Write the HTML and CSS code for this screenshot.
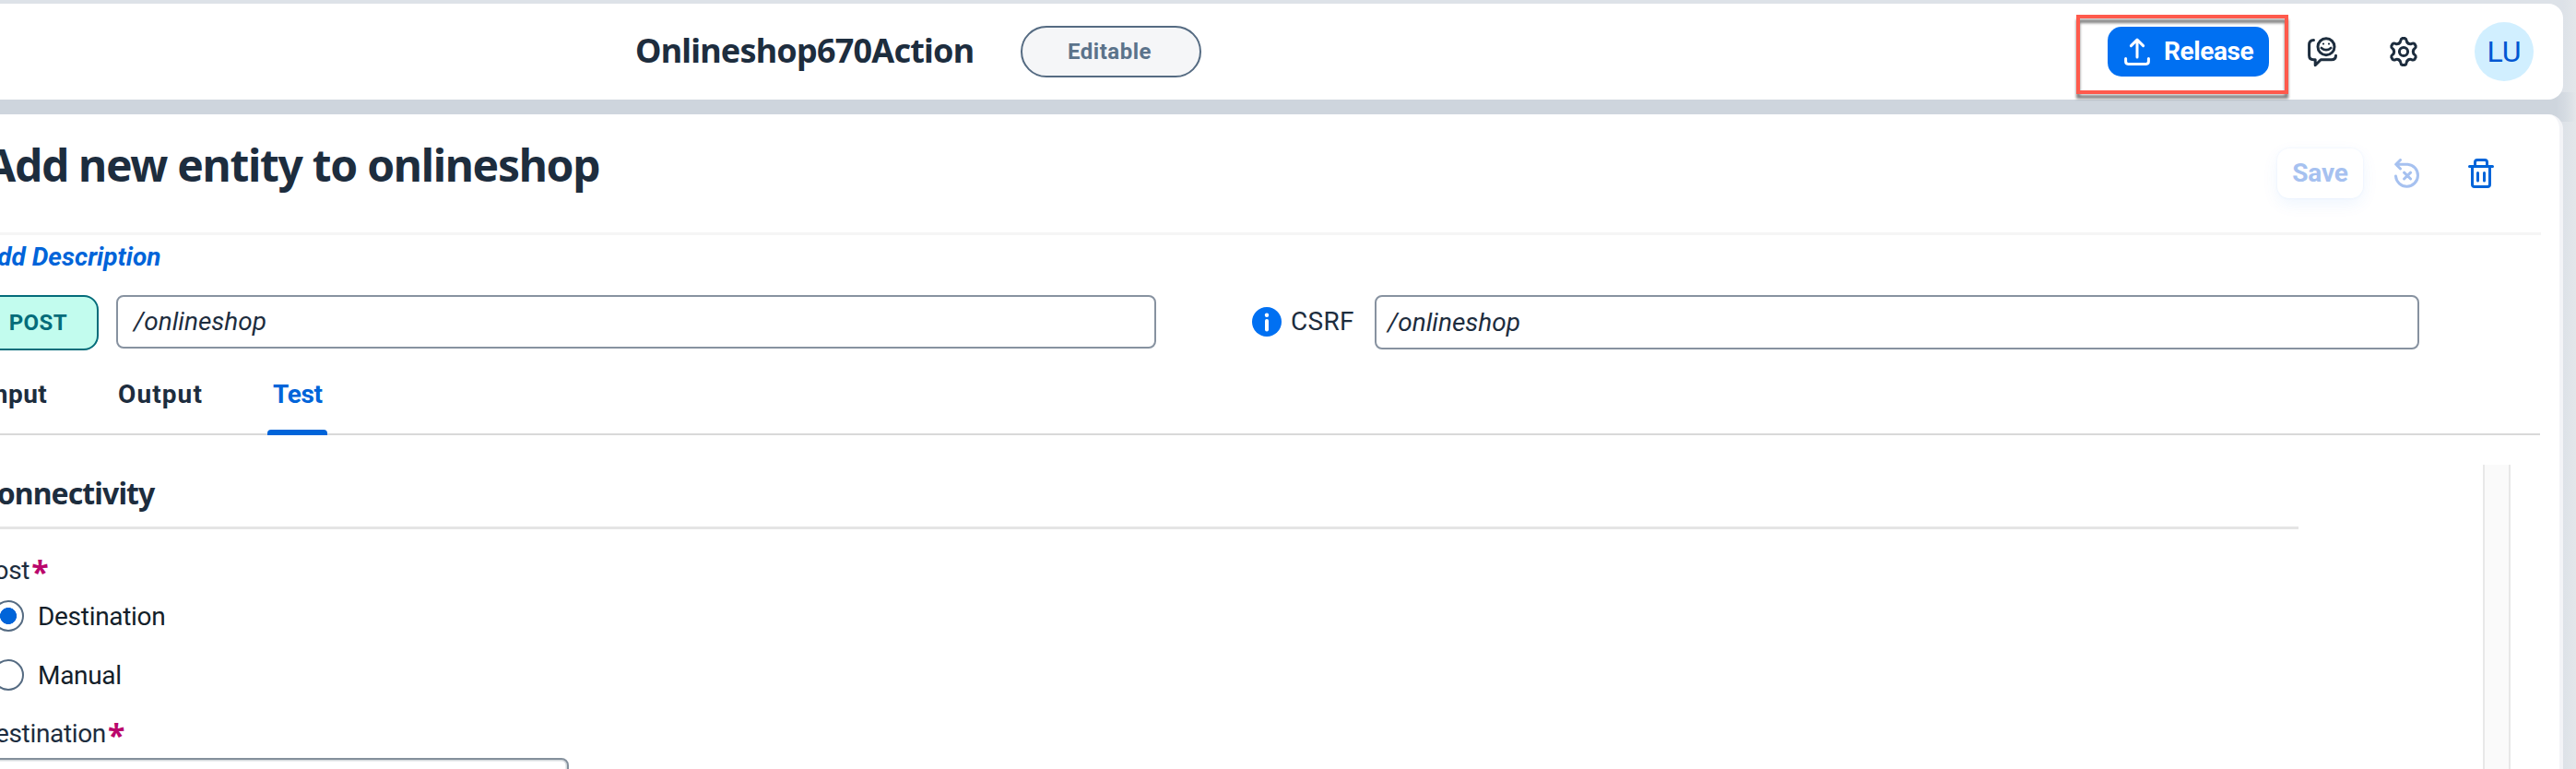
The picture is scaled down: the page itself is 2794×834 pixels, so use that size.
FILE: index.html
```
<!DOCTYPE html>
<html lang="en">
<head>
<meta charset="utf-8">
<title>Onlineshop670Action</title>
<link rel="stylesheet" href="styles.css">
</head>
<body>
<div class="page">
  <header class="shell">
    <h2 class="shell-title">Onlineshop670Action</h2>
    <span class="pill">Editable</span>
    <div class="shell-actions">
      <div class="release-wrap">
        <button class="release">
          <svg class="ic-release" viewBox="0 0 28 30" fill="none" stroke="currentColor" stroke-width="3" stroke-linecap="round" stroke-linejoin="round"><path d="M14 21V2.400M7.400 8.600 14 2.200l6.600 6.400M1.600 22.400v3.400q0 2.600 2.600 2.600h19.600q2.600 0 2.600-2.600v-3.400"/></svg>
          <span>Release</span>
        </button>
        <span class="highlight"></span>
      </div>
      <svg class="ic-feedback" viewBox="0 0 32 33" fill="none" stroke="currentColor" stroke-width="3" stroke-linecap="round" stroke-linejoin="round"><circle cx="20" cy="10.700" r="9"/><path d="M14.800 12q5.200 4.400 10.400 0" stroke-width="2.600"/><path d="M6.500 3.600Q1.600 3.600 1.600 8.500V20q0 4.700 4.700 4.700h1.900v6l6-6h11.600q4.700 0 4.700-4.500"/><circle cx="17" cy="7.600" r="1.100" fill="currentColor" stroke="none"/><circle cx="23" cy="7.600" r="1.100" fill="currentColor" stroke="none"/></svg>
      <svg class="ic-gear" viewBox="0 0 32 32" fill="none" stroke="currentColor" stroke-width="3" stroke-linecap="round" stroke-linejoin="round">
        <defs><path id="tooth" d="M10.800 7.100Q12.700 6 12.800 4.200 13 2 14.700 1.500h2.600Q19 2 19.200 4.200 19.300 6 21.200 7.100"/></defs>
        <circle cx="16" cy="16" r="4.600"/>
        <use href="#tooth"/>
        <use href="#tooth" transform="rotate(60 16 16)"/>
        <use href="#tooth" transform="rotate(120 16 16)"/>
        <use href="#tooth" transform="rotate(180 16 16)"/>
        <use href="#tooth" transform="rotate(240 16 16)"/>
        <use href="#tooth" transform="rotate(300 16 16)"/>
      </svg>
      <span class="avatar">LU</span>
    </div>
  </header>

  <main class="panel">
    <div class="panel-head">
      <h1 class="heading">Add new entity to onlineshop</h1>
      <div class="head-actions">
        <button class="save">Save</button>
        <svg class="ic-reset" viewBox="0 0 28 32" fill="none" stroke="currentColor" stroke-width="3" stroke-linecap="round" stroke-linejoin="round"><path d="M6.500 1.500 1.700 6.200l4.800 4.800M2 6.200h12.300a12 12 0 1 1-12.800 12.800M10.600 15.200l7 6.800M17.600 15.200l-7 6.800"/></svg>
        <svg class="ic-trash" viewBox="0 0 28 32" fill="none" stroke="currentColor" stroke-width="3" stroke-linecap="round" stroke-linejoin="round"><path d="M1.500 8.500h25M7.500 8V4q0-2.500 2.500-2.500h8q2.500 0 2.500 2.500v4M4.500 9v19q0 2.500 2.500 2.500h14q2.500 0 2.500-2.500V9M10.500 15.500v8.500M17.500 15.500v8.500"/></svg>
      </div>
    </div>
    <a class="add-desc">Add Description</a>
    <div class="endpoint">
      <span class="method">POST</span>
      <div class="field path">/onlineshop</div>
      <svg class="info" viewBox="0 0 32 32"><circle cx="16" cy="16" r="16" fill="#0070f2"/><circle cx="16" cy="8.700" r="2.200" fill="#fff"/><path d="M16 15v9.500" stroke="#fff" stroke-width="4" stroke-linecap="round"/></svg>
      <label class="csrf">CSRF</label>
      <div class="field token">/onlineshop</div>
    </div>
    <nav class="tabs">
      <a class="tab">Input</a>
      <a class="tab tab-output">Output</a>
      <a class="tab tab-active">Test</a>
    </nav>
    <div class="content">
      <section class="form">
        <h3 class="section">Connectivity</h3>
        <div class="label label-host">Host<b>*</b></div>
        <div class="radio"><span class="dot on"></span>Destination</div>
        <div class="radio"><span class="dot"></span>Manual</div>
        <div class="label">Destination<b>*</b></div>
        <div class="select"></div>
      </section>
      <div class="scroll"></div>
    </div>
  </main>
</div>
</body>
</html>
```
FILE: styles.css
```
* { box-sizing: border-box; margin: 0; padding: 0; }
html, body { width: 2794px; height: 834px; overflow: hidden; }
body { color: #1d2d3e; font-family: Roboto, "Noto Sans", sans-serif; font-size: 28px; }
svg { display: block; flex: none; }
button { border: 0; font-family: inherit; }
.page {
  display: flex; flex-direction: column; gap: 16px; height: 834px; padding: 4px 14px 0 0; overflow: hidden;
  background:
    linear-gradient(to right, #ced5dd 2772px, rgba(206, 213, 221, 0) 2794px) 0 100px / 100% 32px no-repeat,
    linear-gradient(to right, #dde2e8 2780px, #e3e7ea 2794px);
}

.shell { flex: none; display: flex; align-items: center; height: 104px; padding: 0 32px 0 690px; background: #fff; border-radius: 0 16px 16px 0; }
.shell-title { width: 417px; margin-left: -1px; margin-right: 1px; font-family: "Noto Sans", sans-serif; font-size: 36px; line-height: 44px; font-weight: 700; letter-spacing: -.8px; white-space: nowrap; padding-bottom: 2px; }
.pill { width: 196px; height: 56px; padding-right: 3px; border: 2px solid #556b82; border-radius: 28px; background: #f5f6f8; color: #5b738b; font-size: 24px; font-weight: 700; letter-spacing: .5px; line-height: 53px; text-align: center; }
.shell-actions { display: flex; align-items: center; margin-left: auto; }
.release-wrap { position: relative; margin: 0 42px 0 0; }
.release { display: flex; align-items: center; width: 175px; height: 54px; padding-left: 18px; gap: 15px; border-radius: 15px; background: #0070f2; color: #fff; font-size: 28px; font-weight: 700; letter-spacing: -.4px; }
.release span { padding-bottom: 2px; }
.highlight { position: absolute; left: -34px; top: -13px; width: 230px; height: 86px; border: 4px solid #ff5a4c; filter: drop-shadow(0 5px 1.5px rgba(0, 0, 0, .5)); }
.ic-release { width: 28px; height: 30px; }
.ic-feedback { width: 32px; height: 33px; margin-right: 56px; }
.ic-gear { width: 32px; height: 32px; margin-right: 61px; }
.avatar { width: 64px; height: 64px; border-radius: 50%; background: #d1efff; color: #0057d2; font-size: 32px; line-height: 64px; text-align: center; }

.panel { flex: 1; display: flex; flex-direction: column; min-height: 0; background: #fff; border-right: 4px solid #f3f4f7; border-radius: 0 16px 0 0; overflow: hidden; }
.panel-head { flex: none; display: flex; width: 2756px; height: 131px; border-bottom: 3px solid #f5f5f5; }
.heading { margin-left: -16px; padding-top: 26px; font-family: "Noto Sans", sans-serif; font-size: 48px; line-height: 58px; font-weight: 700; letter-spacing: -1.32px; white-space: nowrap; }
.head-actions { display: flex; align-items: center; height: 128px; margin-left: auto; padding-right: 51px; color: #0064d9; }
.save { width: 93px; height: 54px; margin-right: 34px; padding-bottom: 2px; border-radius: 13px; background: #fff; box-shadow: 0 6px 18px rgba(0, 112, 242, .07), 0 0 3px rgba(0, 112, 242, .07); color: #a6c1f0; font-size: 28px; font-weight: 700; letter-spacing: -.2px; }
.ic-reset { width: 28px; height: 32px; margin-right: 52px; color: #a6c1f0; }
.ic-trash { width: 28px; height: 32px; }
.add-desc { flex: none; height: 65px; margin-left: -21px; padding-top: 7px; color: #0064d9; font-style: italic; font-weight: 700; line-height: 34px; white-space: nowrap; }
.endpoint { flex: none; display: flex; align-items: flex-start; height: 60px; }
.method { width: 127px; height: 60px; margin-left: -20px; padding-right: 32px; border: 2px solid #046c7a; border-radius: 16px; background: #c2fcee; color: #046c7a; font-size: 24px; font-weight: 700; letter-spacing: .4px; line-height: 56px; text-align: right; }
.field { border: 2px solid #8792a0; border-radius: 8px; font-style: italic; white-space: nowrap; }
.path { width: 1128px; height: 58px; margin-left: 19px; padding-left: 17px; line-height: 54px; }
.token { width: 1133px; height: 59px; margin-left: 20px; padding-left: 12px; line-height: 56px; }
.info { width: 32px; height: 32px; margin: 13px 10px 0 104px; }
.csrf { width: 71px; letter-spacing: .3px; line-height: 57px; }
.tabs { flex: none; display: flex; width: 2755px; height: 92px; padding-top: 27px; border-bottom: 2px solid #d9d9d9; font-weight: 700; line-height: 42px; }
.tab { width: 144px; margin-left: -16px; letter-spacing: .5px; }
.tab-output { width: 162px; margin: 0; letter-spacing: 1.1px; }
.tab-active { display: flex; flex-direction: column; justify-content: space-between; width: 65px; margin: 0 0 -2px; padding-left: 6px; letter-spacing: -.4px; color: #0064d9; }
.tab-active::after { content: ""; width: 65px; height: 6px; margin-left: -6px; border-radius: 4px 4px 0 0; background: #0064d9; }
.content { flex: 1; display: flex; min-height: 0; }
.form { width: 2493px; padding-top: 24px; }
.section { height: 78px; margin-left: -23px; padding-top: 19px; border-bottom: 3px solid #e5e5e5; font-family: "Noto Sans", sans-serif; font-size: 32px; letter-spacing: -.9px; line-height: 40px; }
.label { height: 58px; margin-left: -23px; letter-spacing: -.35px; line-height: 63px; white-space: nowrap; }
.label b { margin-left: 2px; color: #ba066c; font: 700 34px/0 "Noto Sans", sans-serif; vertical-align: -5px; }
.label-host { height: 47px; margin: 15px 0 0 -26px; line-height: 60px; }
.radio { display: flex; align-items: center; height: 64px; margin-left: -8px; gap: 15px; color: #131e29; letter-spacing: -.3px; }
.dot { width: 34px; height: 34px; border: 2px solid #556b82; border-radius: 50%; }
.dot.on { background: radial-gradient(circle, #0064d9 8.700px, transparent 9.300px); }
.select { width: 637px; height: 60px; margin-left: -20px; border: 2px solid #84909c; border-radius: 8px; box-shadow: inset 0 0 0 1.500px #d5dadd; }
.scroll { width: 30px; margin: 32px 0 0 200px; border: solid #e8e8e8; border-width: 0 2px; background: #fafafa; }
```
